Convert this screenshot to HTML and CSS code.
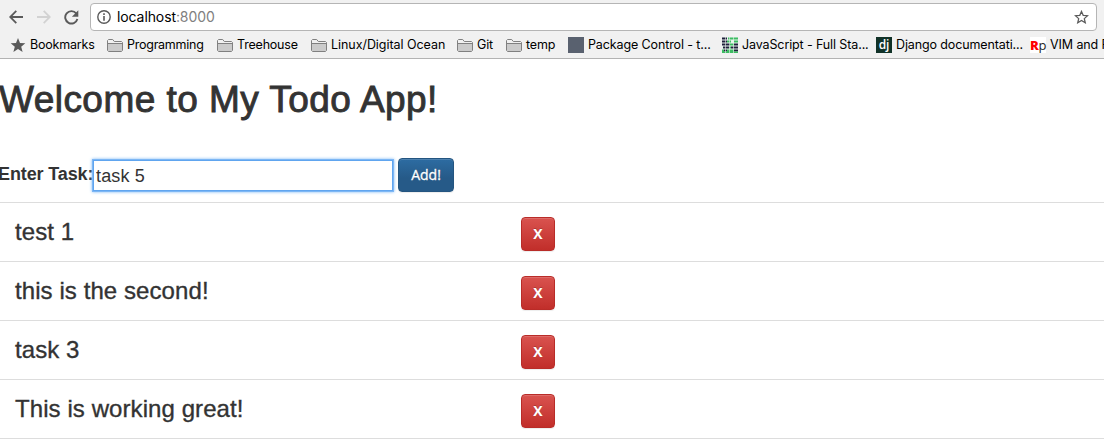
FILE: index.html
```html
<!DOCTYPE html>
<html lang="en">
<head>
<meta charset="utf-8">
<title>Todo App</title>
<link rel="stylesheet" href="styles.css">
</head>
<body>
<svg class="defs" width="0" height="0">
  <symbol id="folder" viewBox="0 0 16 13"><path d="M.5 11.5v-10l1-1h4.2l1.6 2h7.2l1 1v8l-1 1h-13z" fill="#f0f0f0" stroke="#808080"/><path d="M1 4.5h14v7.5H1z" fill="#cbcbcb"/><path d="M1 4.5h14" stroke="#808080"/></symbol>
</svg>
<header class="chrome">
  <div class="toolbar">
    <svg class="nav back" width="14" height="14" viewBox="0 0 14 14"><path d="M14 7H1.5M7.3.9L1.2 7l6.1 6.1" fill="none" stroke="#5a5a5a" stroke-width="1.8"/></svg>
    <svg class="nav forward" width="14" height="14" viewBox="0 0 14 14"><path d="M0 7h12.5M6.7.9L12.8 7l-6.1 6.1" fill="none" stroke="#d2d2d2" stroke-width="1.8"/></svg>
    <svg class="nav reload" width="15" height="15" viewBox="0 0 15 15"><path d="M12.3 3.5A6.2 6.2 0 1 0 13.4 9" fill="none" stroke="#5a5a5a" stroke-width="1.9"/><path d="M14.3.3v6.4H7.9z" fill="#5a5a5a"/></svg>
    <div class="address">
      <svg width="14" height="14" viewBox="0 0 14 14"><circle cx="7" cy="7" r="6.2" fill="none" stroke="#5a5a5a" stroke-width="1.4"/><path d="M7 6v4.7M7 3.3v1.6" stroke="#5a5a5a" stroke-width="1.6"/></svg>
      <span class="url">localhost<span class="port">:8000</span></span>
      <svg class="fav" width="15" height="14" viewBox="0 0 15 14"><path d="M7.5 1.4l1.7 3.9 4.4.4-3.3 2.9 1 4.2-3.8-2.3-3.8 2.3 1-4.2-3.3-2.9 4.4-.4z" fill="none" stroke="#5a5a5a" stroke-width="1.25"/></svg>
    </div>
  </div>
  <nav class="bookmarks">
    <div class="bm w1"><svg width="16" height="16" viewBox="0 0 16 16"><path d="M8 1l2 5 5.3.3-4.1 3.4 1.4 5.2L8 12l-4.6 2.9 1.4-5.2L.7 6.3 6 6z" fill="#5a5a5a"/></svg><span>Bookmarks</span></div>
    <div class="bm w2"><svg width="16" height="13"><use href="#folder"/></svg><span>Programming</span></div>
    <div class="bm w3"><svg width="16" height="13"><use href="#folder"/></svg><span>Treehouse</span></div>
    <div class="bm w4"><svg width="16" height="13"><use href="#folder"/></svg><span>Linux/Digital Ocean</span></div>
    <div class="bm w5"><svg width="16" height="13"><use href="#folder"/></svg><span>Git</span></div>
    <div class="bm w6"><svg width="16" height="13"><use href="#folder"/></svg><span>temp</span></div>
    <div class="bm w7"><i class="site slate"></i><span>Package Control - t...</span></div>
    <div class="bm w7"><svg width="16" height="16" viewBox="0 0 16 16"><path fill="#e8f3ec" d="M0 0h16v16H0z"/><path d="M0 1.5h5M0 4.5h5M0 7.5h8M1 10.5h6M12 7.5h4M9 10.5h7M2 13.5h3M12 13.5h4" stroke="#20203c" stroke-width="2"/><path d="M6 1.5h10M5 4.5h4M12 4.5h4M8 7.5h4M7 10.5h2M0 13.5h2M5 13.5h7M0 15.5h16" stroke="#3dbb62" stroke-width="2"/><path d="M3.5 0v16M7.5 0v16M11.5 0v16" stroke="#e8f3ec" stroke-width=".6"/></svg><span>JavaScript - Full Sta...</span></div>
    <div class="bm w7"><i class="site dj">dj</i><span>Django documentati...</span></div>
    <div class="bm last"><i class="site rp"><b>R</b>p</i><span>VIM and P</span></div>
  </nav>
</header>
<main>
  <h1>Welcome to My Todo App!</h1>
  <form class="entry">
    <label for="task">Enter Task:</label><input id="task" type="text" value="task 5"><button type="button" class="btn primary">Add!</button>
  </form>
  <ul class="tasks">
    <li><span>test 1</span><button class="btn danger">X</button></li>
    <li><span>this is the second!</span><button class="btn danger">X</button></li>
    <li><span>task 3</span><button class="btn danger">X</button></li>
    <li><span>This is working great!</span><button class="btn danger">X</button></li>
  </ul>
</main>
</body>
</html>
```
FILE: styles.css
```css
* { box-sizing: border-box; }
body { margin: 0; overflow: hidden; background: #fff; color: #333; font-family: "Liberation Sans", Arial, sans-serif; }
.defs { display: block; }
.chrome { height: 59px; background: #f1f1f1; border-bottom: 1px solid #b3b3b3; font-family: Inter, sans-serif; color: #000; overflow: hidden; }
.toolbar { display: flex; align-items: center; height: 31px; padding: 3px 7px 0 9px; }
.nav { flex: none; }
.forward { margin-left: 14px; }
.reload { margin-left: 13px; }
.address { display: flex; align-items: center; flex: 1; height: 28px; margin-left: 11px; padding: 0 7px 0 6px; background: #fff; border: 1px solid #b5b5b5; border-radius: 4px; }
.url { margin-left: 6px; font-size: 14px; letter-spacing: -.1px; line-height: 16px; padding-bottom: 1px; }
.port { color: #808080; }
.fav { margin-left: auto; }
.bookmarks { display: flex; height: 28px; padding-left: 10px; font-size: 12.5px; letter-spacing: -.12px; white-space: nowrap; }
.bm { display: flex; flex: none; align-items: center; gap: 4px; }
.bm > span { padding-bottom: 2px; }
.bm svg { flex: none; }
.w1 { width: 97px; } .w2 { width: 110px; } .w3 { width: 94px; } .w4 { width: 146px; } .w5 { width: 49px; } .w6 { width: 62px; } .w7 { width: 154px; }
.w1 { letter-spacing: -.2px; }
.w3 { letter-spacing: -.2px; }
.w2 { letter-spacing: -.25px; }
.w4 { letter-spacing: -.05px; }
.last { letter-spacing: -.1px; }
.site { display: flex; flex: none; width: 16px; height: 16px; align-items: center; justify-content: center; font-style: normal; }
.slate { background: #59616f; }
.dj { background: #113228; color: #fff; font: 600 12px/14px "Open Sans", sans-serif; }
.rp { background: #fff; color: #222; font: 13px/16px "Open Sans", sans-serif; letter-spacing: -.5px; }
.rp b { color: #f00; font-weight: 800; }
h1 { height: 99px; margin: 0 0 0 -1px; padding-top: 21px; font-size: 37px; line-height: 40px; font-weight: 400; letter-spacing: .45px; -webkit-text-stroke: .9px #333; white-space: nowrap; }
.entry { display: flex; height: 44px; align-items: flex-start; }
label { width: 94px; margin-left: -2px; font-size: 18px; font-weight: 700; line-height: 32px; letter-spacing: -.12px; white-space: nowrap; }
input { width: 300px; height: 31px; margin: 2px 0 0 1px; padding: 3px 2px 1px; border: 1px solid #60a5ef; outline: 0; box-shadow: 0 0 0 1px #7db7f5, 0 0 3px 1px #7db7f5; font: 18px "Liberation Sans", Arial, sans-serif; letter-spacing: .15px; color: #333; }
.btn { height: 34px; padding: 0; border-radius: 4px; color: #fff; font: 14px/20px "Open Sans", sans-serif; text-shadow: 0 -1px 0 rgba(0,0,0,.2); box-shadow: inset 0 1px 0 rgba(255,255,255,.15), 0 1px 1px rgba(0,0,0,.075); }
.primary { width: 56px; margin-left: 5px; border: 1px solid #245580; background: linear-gradient(#2d6ca2, #265a88 60%); -webkit-text-stroke: .3px #fff; }
.danger { flex: none; width: 34px; border: 1px solid #b92c28; background: linear-gradient(#d9534f, #c12e2a); font-weight: 700; }
.tasks { margin: 0; padding: 0; list-style: none; border-bottom: 1px solid #ddd; }
.tasks li { display: flex; height: 59px; padding: 14px 15px 0; border-top: 1px solid #ddd; }
.tasks span { width: 506px; font-size: 24px; line-height: 29px; letter-spacing: .08px; -webkit-text-stroke: .35px #333; }
```
